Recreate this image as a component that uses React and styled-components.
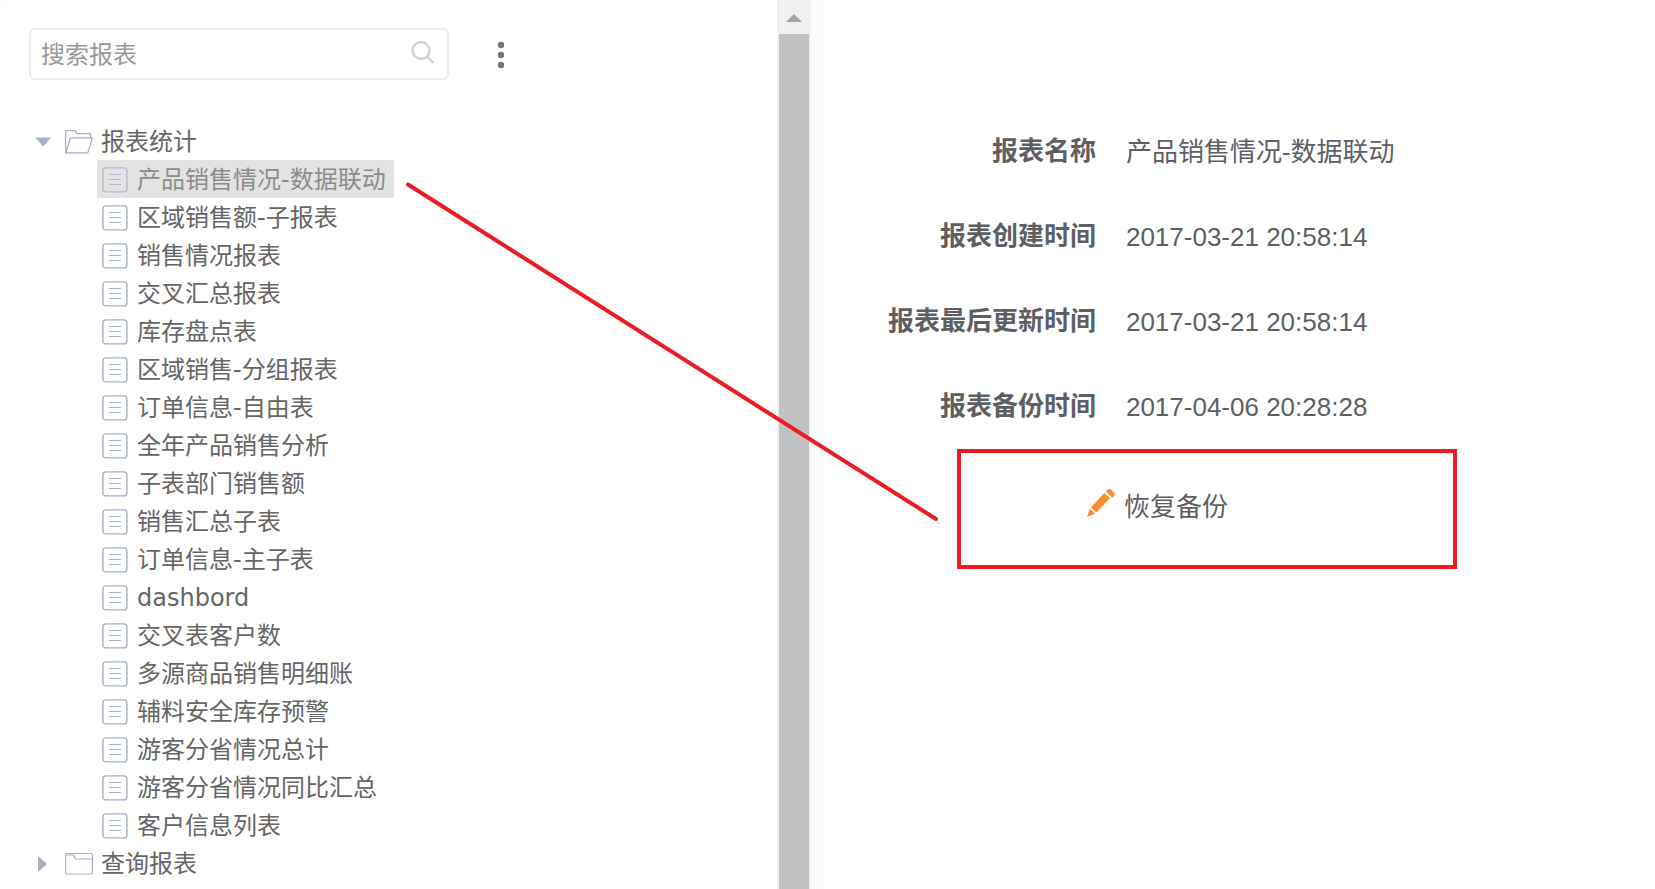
import React, { useState } from "react";
import styled, { createGlobalStyle } from "styled-components";

const GlobalStyle = createGlobalStyle`
  * {
    box-sizing: border-box;
  }
  body {
    margin: 0;
    background-color: #f9fbfe;
    font-family: "DejaVu Sans", "Noto Sans CJK SC", sans-serif;
    color: #5e5f63;
  }
`;

const Page = styled.div`
  position: relative;
  display: flex;
  gap: 12px;
  height: 100vh;
  overflow: hidden;
`;

const Sidebar = styled.aside`
  display: flex;
  flex: 0 0 49%;
  background-color: #fff;
  border-top-left-radius: 8px;
  overflow: hidden;
`;

const SidebarBody = styled.div`
  flex: 1;
  padding: 28px 30px 0 29px;
  overflow: hidden;
`;

const ScrollTrack = styled.div`
  display: flex;
  flex-direction: column;
  width: 34px;
  padding: 0 2px;
  background-color: #f0f0f0;
`;

const ScrollArrow = styled.div`
  display: flex;
  align-items: center;
  justify-content: center;
  height: 34px;
  padding-top: 2px;
`;

const ScrollThumb = styled.div`
  flex: 1;
  background-color: #c1c1c1;
`;

const Toolbar = styled.div`
  display: flex;
  align-items: center;
  gap: 40px;
  margin-bottom: 42px;
`;

const Search = styled.label`
  display: flex;
  align-items: center;
  width: 420px;
  height: 52px;
  padding: 0 12px 0 10px;
  border: 2px solid #e8edf3;
  border-radius: 6px;
`;

const SearchInput = styled.input`
  flex: 1;
  min-width: 0;
  padding: 2px 0 0;
  border: none;
  outline: none;
  background-color: transparent;
  font-family: inherit;
  font-size: 24px;
  color: #666;
  &::placeholder {
    color: #999;
    opacity: 1;
  }
`;

const MoreButton = styled.button`
  display: flex;
  padding: 2px 0 0;
  border: none;
  background-color: transparent;
  cursor: pointer;
`;

const List = styled.ul`
  margin: 0;
  padding: 0;
  list-style: none;
`;

const Folder = styled.button`
  display: flex;
  align-items: center;
  height: 38px;
  padding: 2px 0 0 6px;
  border: none;
  background-color: transparent;
  font-family: inherit;
  font-size: 24px;
  line-height: 36px;
  color: #666;
  cursor: pointer;
`;

const FolderName = styled.span`
  margin-left: 7px;
`;

const Report = styled.button`
  display: flex;
  align-items: center;
  gap: 9px;
  height: 38px;
  margin-left: 68px;
  padding: 2px 8px 0 5px;
  border: none;
  background-color: ${({ $active }) => ($active ? "#e3e3e3" : "transparent")};
  font-family: inherit;
  font-size: 24px;
  line-height: 36px;
  white-space: nowrap;
  color: ${({ $active }) => ($active ? "#8c8c8c" : "#666")};
  cursor: pointer;
`;

const Detail = styled.main`
  flex: 1;
  padding: 109px 0 0 65px;
  background-color: #fff;
  border-top-left-radius: 8px;
`;

const Fields = styled.dl`
  margin: 0;
`;

const Field = styled.div`
  display: flex;
  gap: 30px;
  height: 85px;
  font-family: "Liberation Sans", "Noto Sans CJK SC", sans-serif;
  font-size: 26px;
  line-height: 40px;
`;

const FieldLabel = styled.dt`
  width: 208px;
  padding-top: 22px;
  text-align: right;
  font-weight: bold;
`;

const FieldValue = styled.dd`
  margin: 0;
  padding-top: 23px;
`;

const RestoreButton = styled.button`
  display: flex;
  align-items: flex-start;
  gap: 8px;
  margin: 38px 0 0 198px;
  padding: 0;
  border: none;
  background-color: transparent;
  font-family: "Liberation Sans", "Noto Sans CJK SC", sans-serif;
  font-size: 26px;
  line-height: 40px;
  color: #5e5f63;
  cursor: pointer;
`;

const Annotation = styled.svg`
  position: absolute;
  top: 0;
  left: 0;
  pointer-events: none;
`;

const ReportIcon = ({ faded }) => (
  <svg width="26" height="26" viewBox="0 0 26 26" fill="none" stroke="#a6b0c3" opacity={faded ? 0.75 : 1}>
    <rect x="0.9" y="0.9" width="24" height="24" rx="3" strokeWidth="1.4" />
    <path d="M7 7.500h12M7 12.500h12M7 17.500h12" strokeWidth="1.2" />
  </svg>
);

const ArrowIcon = ({ open }) => (
  <svg width="30" height="16" viewBox="0 0 30 16" fill="#a6b0c3">
    {open ? <path d="M0.500 3.500h15.500L8.200 12.500z" /> : <path d="M3 0v16l9-8z" />}
  </svg>
);

const FolderIcon = ({ open }) => (
  <svg width="29" height="24" viewBox="0 0 29 24" fill="none" stroke="#a6b0c3" strokeWidth="1.2">
    {open ? (
      <path d="M0.600 22.800V0.700h9.400l2 3h13.500v4M0.600 22.800L5.500 7.800h22l-4.700 15z" />
    ) : (
      <path d="M2.500 1.500h23.500a1.500 1.500 0 0 1 1.500 1.500v17.500a1.500 1.500 0 0 1-1.500 1.500h-24a1.500 1.500 0 0 1-1.500-1.500v-17.500a1.500 1.500 0 0 1 1.500-1.500zM1 3h7.500l2 4h17.500" />
    )}
  </svg>
);

const reports = [
  "产品销售情况-数据联动",
  "区域销售额-子报表",
  "销售情况报表",
  "交叉汇总报表",
  "库存盘点表",
  "区域销售-分组报表",
  "订单信息-自由表",
  "全年产品销售分析",
  "子表部门销售额",
  "销售汇总子表",
  "订单信息-主子表",
  "dashbord",
  "交叉表客户数",
  "多源商品销售明细账",
  "辅料安全库存预警",
  "游客分省情况总计",
  "游客分省情况同比汇总",
  "客户信息列表",
];

const fields = [
  { label: "报表名称", value: "产品销售情况-数据联动" },
  { label: "报表创建时间", value: "2017-03-21 20:58:14" },
  { label: "报表最后更新时间", value: "2017-03-21 20:58:14" },
  { label: "报表备份时间", value: "2017-04-06 20:28:28" },
];

const App = () => {
  const [q, setQ] = useState("");
  const [open, setOpen] = useState(true);
  const [selected, setSelected] = useState(reports[0]);

  return (
    <>
      <GlobalStyle />
      <Page>
        <Sidebar>
          <SidebarBody>
            <Toolbar>
              <Search>
                <SearchInput
                  aria-label="搜索报表"
                  placeholder="搜索报表"
                  value={q}
                  onChange={(e) => setQ(e.target.value)}
                />
                <svg width="24" height="26" viewBox="0 0 24 26" fill="none" stroke="#cdd2da" strokeWidth="2.400">
                  <circle cx="10" cy="9.500" r="8.500" />
                  <path d="M16 15.500l6.500 6.500" />
                </svg>
              </Search>
              <MoreButton aria-label="更多">
                <svg width="24" height="28" viewBox="0 0 24 28" fill="#777">
                  <circle cx="12" cy="4" r="3.200" />
                  <circle cx="12" cy="14" r="3.200" />
                  <circle cx="12" cy="24" r="3.200" />
                </svg>
              </MoreButton>
            </Toolbar>
            <List>
              <li>
                <Folder onClick={() => setOpen((prev) => !prev)}>
                  <ArrowIcon open={open} />
                  <FolderIcon open={open} />
                  <FolderName>报表统计</FolderName>
                </Folder>
                {open && (
                  <List>
                    {reports.map((name) => (
                      <li key={name}>
                        <Report $active={name === selected} onClick={() => setSelected(name)}>
                          <ReportIcon faded={name === selected} />
                          {name}
                        </Report>
                      </li>
                    ))}
                  </List>
                )}
              </li>
              <li>
                <Folder>
                  <ArrowIcon />
                  <FolderIcon />
                  <FolderName>查询报表</FolderName>
                </Folder>
              </li>
            </List>
          </SidebarBody>
          <ScrollTrack>
            <ScrollArrow>
              <svg width="16" height="8" viewBox="0 0 16 8" fill="#a3a3a3">
                <path d="M8 0l8 8H0z" />
              </svg>
            </ScrollArrow>
            <ScrollThumb />
          </ScrollTrack>
        </Sidebar>
        <Detail>
          <Fields>
            {fields.map(({ label, value }) => (
              <Field key={label}>
                <FieldLabel>{label}</FieldLabel>
                <FieldValue>{value}</FieldValue>
              </Field>
            ))}
          </Fields>
          <RestoreButton>
            <svg width="30" height="32" viewBox="0 0 30 32" fill="#ff8c2b">
              <path d="M1 30l3-8.500 5 5.200zM5 20.300L18.500 6l5.300 5.300L10.200 25.600zM19.800 4.600l1.800-1.800a2.500 2.500 0 0 1 3.500 0l3 3a2.200 2.200 0 0 1 0 3.200l-1.700 1.700z" />
            </svg>
            恢复备份
          </RestoreButton>
        </Detail>
        <Annotation width="1655" height="889" fill="none" stroke="#ed1c24" strokeWidth="4">
          <path d="M408 184.500L936 519" strokeLinecap="round" />
          <rect x="959" y="451" width="496" height="116" />
        </Annotation>
      </Page>
    </>
  );
};

export default App;
